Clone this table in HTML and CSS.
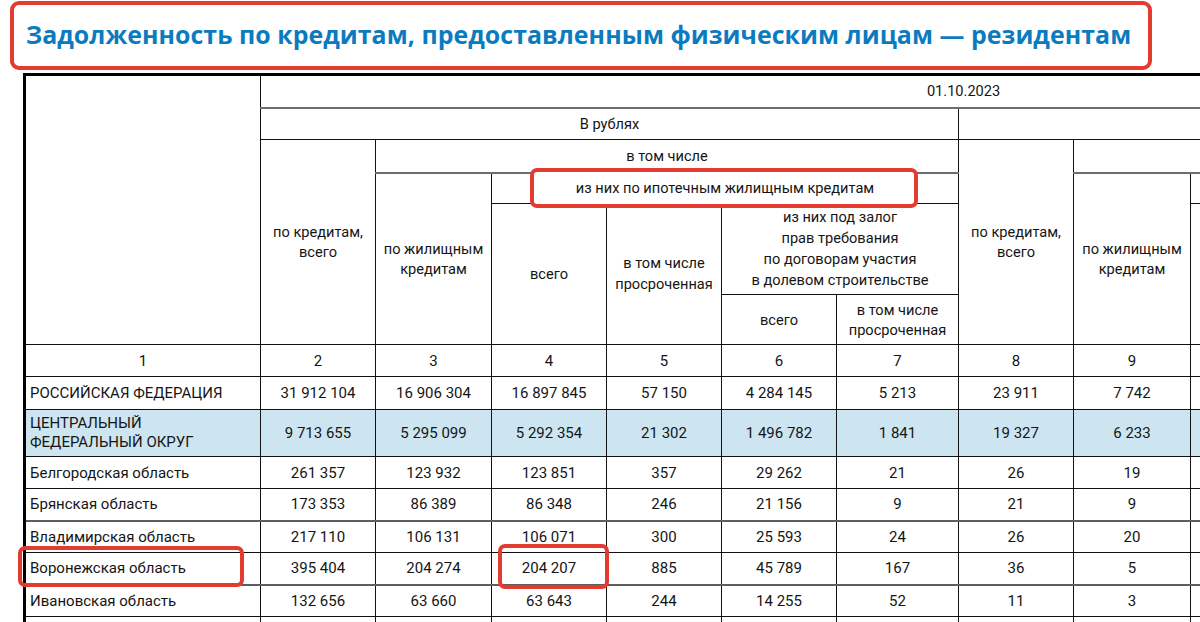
FILE: index.html
```html
<!DOCTYPE html>
<html lang="ru">
<head>
<meta charset="utf-8">
<title>Задолженность по кредитам</title>
<link rel="stylesheet" href="styles.css">
</head>
<body>
<div class="page">
  <h1 class="title">Задолженность по кредитам, предоставленным физическим лицам — резидентам</h1>
  <table class="grid">
    <colgroup>
      <col class="w-name">
      <col class="w-115"><col class="w-116"><col class="w-115"><col class="w-115"><col class="w-115"><col class="w-122">
      <col class="w-115"><col class="w-117"><col class="w-119"><col class="w-119"><col class="w-119"><col class="w-119">
    </colgroup>
    <thead>
      <tr class="h-a">
        <th rowspan="6" class="corner"></th>
        <th colspan="12" class="under-gray">01.10.2023</th>
      </tr>
      <tr class="h-b">
        <th colspan="6">В рублях</th>
        <th colspan="6"></th>
      </tr>
      <tr class="h-c">
        <th rowspan="4">по кредитам,<br>всего</th>
        <th colspan="5" class="under-gray">в том числе</th>
        <th rowspan="4">по кредитам,<br>всего</th>
        <th colspan="5" class="under-gray"></th>
      </tr>
      <tr class="h-d">
        <th rowspan="3">по жилищным<br>кредитам</th>
        <th colspan="4" class="marked">
          <span class="mark mark-ipoteka"></span>
          <span class="mark-text">из них по ипотечным жилищным кредитам</span>
        </th>
        <th rowspan="3">по жилищным<br>кредитам</th>
        <th colspan="4"></th>
      </tr>
      <tr class="h-e">
        <th rowspan="2">всего</th>
        <th rowspan="2">в том числе<br>просроченная</th>
        <th colspan="2">из них под залог<br>прав требования<br>по договорам участия<br>в долевом строительстве</th>
        <th rowspan="2"></th>
        <th rowspan="2"></th>
        <th colspan="2"></th>
      </tr>
      <tr class="h-f">
        <th>всего</th>
        <th>в том числе<br>просроченная</th>
        <th></th>
        <th></th>
      </tr>
      <tr class="h-num">
        <th>1</th><th>2</th><th>3</th><th>4</th><th>5</th><th>6</th><th>7</th>
        <th>8</th><th>9</th><th></th><th></th><th></th><th></th>
      </tr>
    </thead>
    <tbody>
      <tr class="r r-33">
        <td class="name">РОССИЙСКАЯ ФЕДЕРАЦИЯ</td>
        <td>31 912 104</td><td>16 906 304</td><td>16 897 845</td><td>57 150</td><td>4 284 145</td><td>5 213</td><td>23 911</td><td>7 742</td>
        <td></td><td></td><td></td><td></td>
      </tr>
      <tr class="r r-tall district">
        <td class="name">ЦЕНТРАЛЬНЫЙ<br>ФЕДЕРАЛЬНЫЙ ОКРУГ</td>
        <td>9 713 655</td><td>5 295 099</td><td>5 292 354</td><td>21 302</td><td>1 496 782</td><td>1 841</td><td>19 327</td><td>6 233</td>
        <td></td><td></td><td></td><td></td>
      </tr>
      <tr class="r">
        <td class="name">Белгородская область</td>
        <td>261 357</td><td>123 932</td><td>123 851</td><td>357</td><td>29 262</td><td>21</td><td>26</td><td>19</td>
        <td></td><td></td><td></td><td></td>
      </tr>
      <tr class="r">
        <td class="name">Брянская область</td>
        <td>173 353</td><td>86 389</td><td>86 348</td><td>246</td><td>21 156</td><td>9</td><td>21</td><td>9</td>
        <td></td><td></td><td></td><td></td>
      </tr>
      <tr class="r top-gray">
        <td class="name">Владимирская область</td>
        <td>217 110</td><td>106 131</td><td>106 071</td><td>300</td><td>25 593</td><td>24</td><td>26</td><td>20</td>
        <td></td><td></td><td></td><td></td>
      </tr>
      <tr class="r">
        <td class="name">Воронежская область</td>
        <td>395 404</td><td>204 274</td><td>204 207</td><td>885</td><td>45 789</td><td>167</td><td>36</td><td>5</td>
        <td></td><td></td><td></td><td></td>
      </tr>
      <tr class="r top-gray">
        <td class="name">Ивановская область</td>
        <td>132 656</td><td>63 660</td><td>63 643</td><td>244</td><td>14 255</td><td>52</td><td>11</td><td>3</td>
        <td></td><td></td><td></td><td></td>
      </tr>
      <tr class="r">
        <td class="name"></td>
        <td></td><td></td><td></td><td></td><td></td><td></td><td></td><td></td>
        <td></td><td></td><td></td><td></td>
      </tr>
    </tbody>
  </table>
  <span class="mark mark-region"></span>
  <span class="mark mark-value"></span>
</div>
</body>
</html>
```

FILE: styles.css
```css
html, body {
  margin: 0;
  padding: 0;
  background: #ffffff;
  overflow: hidden;
}

.page {
  position: relative;
  width: 1200px;
  height: 622px;
  overflow: hidden;
}

.title {
  margin: 1px 0 0 10px;
  width: 1142px;
  height: 69px;
  box-sizing: border-box;
  border: 4px solid #e43b30;
  border-radius: 9px;
  padding: 0 0 3px 12px;
  display: flex;
  align-items: center;
  font-family: "Open Sans", "Liberation Sans", sans-serif;
  font-weight: 700;
  font-size: 24.9px;
  letter-spacing: 0.05px;
  color: #0b7bbf;
  white-space: nowrap;
}

.grid {
  margin: 3px 0 0 23px;
  border-collapse: collapse;
  table-layout: fixed;
  width: 1643px;
  border-top: 3px solid #000;
  border-left: 3px solid #000;
  font-family: Roboto, "Liberation Sans", sans-serif;
  font-size: 15px;
  color: #151515;
}

.w-name { width: 236px; }
.w-115 { width: 115px; }
.w-116 { width: 116px; }
.w-117 { width: 117px; }
.w-119 { width: 119px; }
.w-122 { width: 122px; }

.grid th,
.grid td {
  border: 1px solid #111;
  padding: 0 3px;
  text-align: center;
  vertical-align: middle;
  font-weight: 400;
  line-height: 20px;
  white-space: nowrap;
}

.grid thead th {
  font-size: 14.6px;
}

.grid th.corner {
  border-top: 3px solid #000;
  border-left: 3px solid #000;
}

.grid .h-num th {
  font-size: 15px;
}

.under-gray {
  border-bottom: 2px solid #6d6d6d !important;
}

.h-a { height: 33px; }
.h-b { height: 32px; }
.h-c { height: 33px; }
.h-d { height: 31px; }
.h-e { height: 91px; }
.h-e th { line-height: 21px; }
.h-f { height: 50px; }
.h-num { height: 32px; }

.r { height: 32px; }
.r-33 { height: 33px; }
.r-tall { height: 47px; }
.r-tall td { line-height: 19px; }

.grid td.name {
  text-align: left;
  padding-left: 4px;
}

.district td {
  background: #cde5f0;
}

.top-gray td {
  border-top: 2px solid #5e5e5e;
}

.marked {
  position: relative;
}

.mark-text {
  position: relative;
  z-index: 1;
}

.mark {
  position: absolute;
  box-sizing: border-box;
  border: 4px solid #e43b30;
  border-radius: 7px;
}

.mark-ipoteka {
  left: 38px;
  top: -6px;
  width: 388px;
  height: 40px;
  background: #ffffff;
  z-index: 0;
}

.mark-region {
  left: 18px;
  top: 546px;
  width: 226px;
  height: 41px;
}

.mark-value {
  left: 498px;
  top: 544px;
  width: 111px;
  height: 45px;
}
```
